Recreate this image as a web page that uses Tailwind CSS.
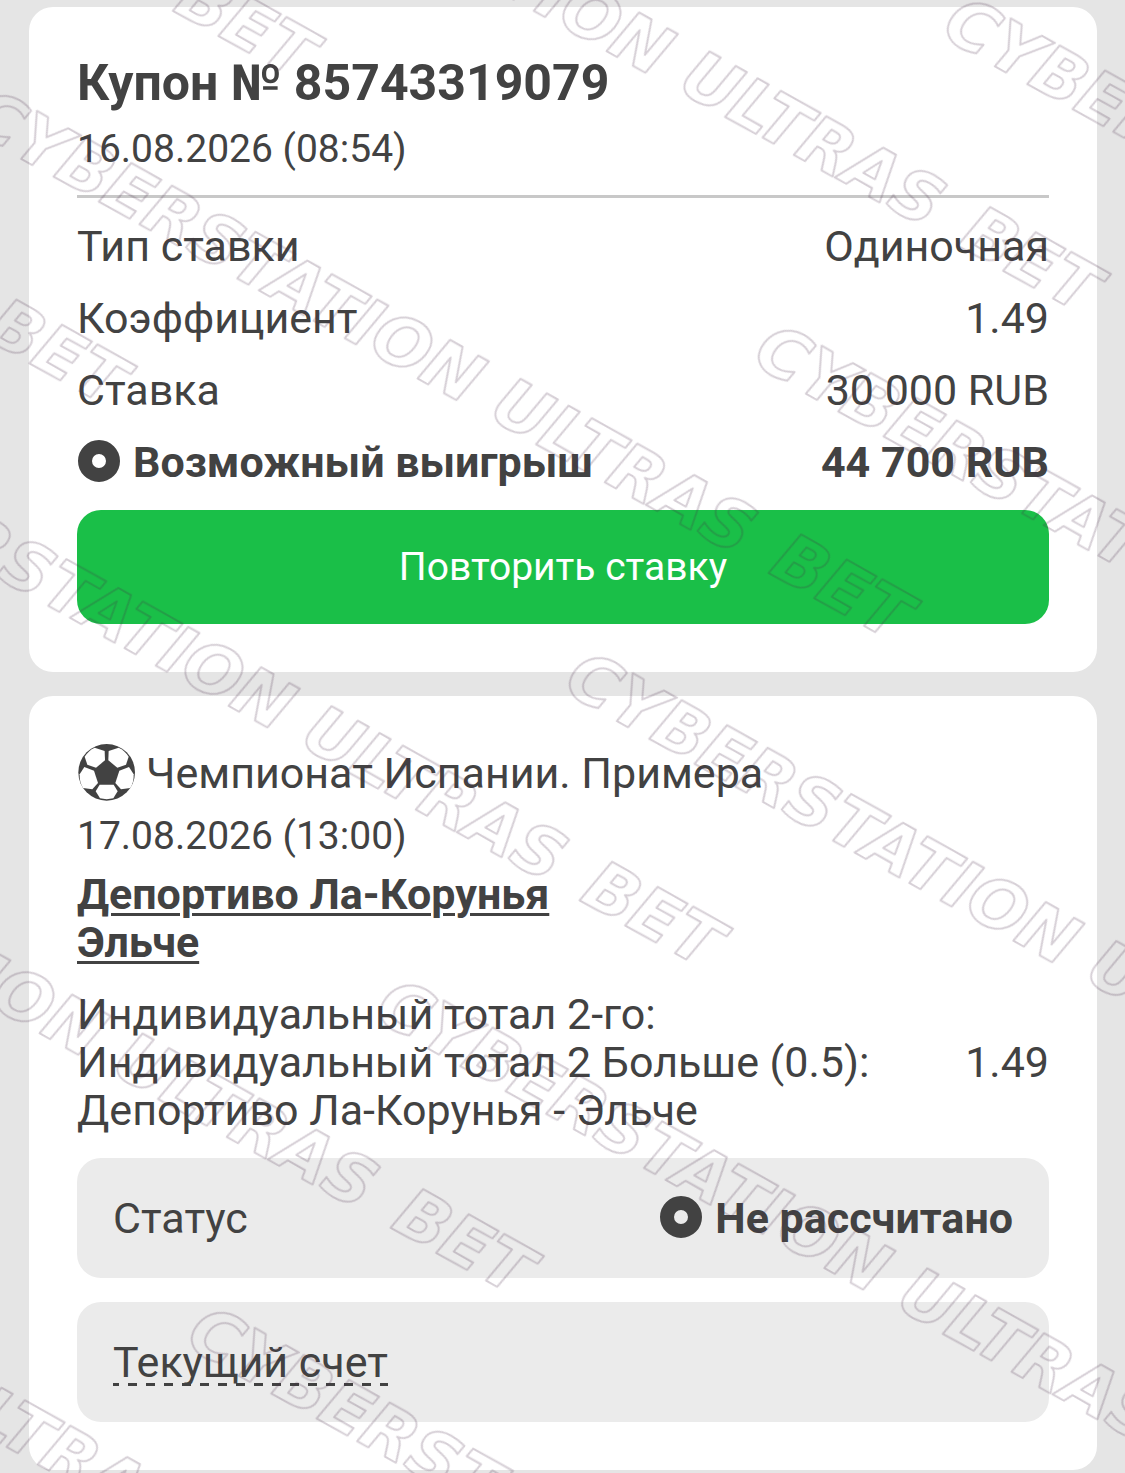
<!DOCTYPE html>
<html lang="ru">
  <head>
    <meta charset="UTF-8" />
    <meta name="viewport" content="width=device-width, initial-scale=1.0" />
    <script src="https://cdn.jsdelivr.net/npm/@tailwindcss/browser@4"></script>
    <title>Купон № 85743319079</title>
  </head>
  <body class="bg-[#e5e5e5] font-[Roboto,sans-serif] text-[#424242]">
    <div class="relative overflow-hidden">
      <main class="flex flex-col gap-6 pt-[7px] pb-[3px] pl-[29px] pr-7 text-[43px] leading-[48px]">
        <!-- coupon -->
        <section class="rounded-3xl bg-white p-12">
          <h1 class="text-[50px] leading-[56px] font-bold">Купон № 85743319079</h1>
          <p class="mt-[14px] text-[39px] leading-[48px]">16.08.2026 (08:54)</p>
          <hr class="mt-[22px] border-t-3 border-[#c8c8c8]" />
          <dl class="mt-6 flex flex-col gap-6">
            <div class="flex justify-between">
              <dt>Тип ставки</dt>
              <dd>Одиночная</dd>
            </div>
            <div class="flex justify-between">
              <dt>Коэффициент</dt>
              <dd>1.49</dd>
            </div>
            <div class="flex justify-between">
              <dt>Ставка</dt>
              <dd>30 000 RUB</dd>
            </div>
            <div class="flex justify-between font-bold">
              <dt class="flex items-center gap-3">
                <svg class="size-11" viewBox="0 0 44 44" aria-hidden="true">
                  <circle cx="22" cy="21" r="14" fill="none" stroke="#424242" stroke-width="14" />
                </svg>
                Возможный выигрыш
              </dt>
              <dd>44 700 RUB</dd>
            </div>
          </dl>
          <button
            type="button"
            class="mt-6 h-[114px] w-full rounded-3xl bg-[#1abf48] text-[39px] text-white"
          >
            Повторить ставку
          </button>
        </section>

        <!-- event -->
        <section class="rounded-3xl bg-white p-12">
          <h2 class="flex items-center gap-[11px]">
            <svg class="size-[58px]" viewBox="51 39 174 174" aria-hidden="true">
              <circle cx="140" cy="124" r="85" fill="#424242" />
              <g fill="#fff">
                <path d="M134 60L135 88L108 110L82 101L74 77Q86 58 104 50Z" />
                <path d="M146 60L145 88L172 110L198 101L206 77Q194 58 176 50Z" />
                <path d="M73 108L102 119L114 156L97 175L69 171Q58 153 59 130Z" />
                <path d="M207 108L178 119L166 156L183 175L211 171Q222 153 221 130Z" />
                <path d="M119 161L161 161L173 181L160 202Q140 207 120 202L107 181Z" />
              </g>
            </svg>
            Чемпионат Испании. Примера
          </h2>
          <p class="mt-[10px] text-[39px] leading-[48px]">17.08.2026 (13:00)</p>
          <a
            href="#"
            class="mt-[10px] block font-bold underline decoration-3 underline-offset-4"
          >
            Депортиво Ла-Корунья<br />Эльче
          </a>
          <div class="mt-6 flex items-center justify-between gap-6">
            <p>
              Индивидуальный тотал 2-го:<br />
              Индивидуальный тотал 2 Больше (0.5):<br />
              Депортиво Ла-Корунья - Эльче
            </p>
            <span>1.49</span>
          </div>
          <div class="mt-6 flex h-[120px] items-center justify-between rounded-3xl bg-[#ebebeb] px-9">
            <span>Статус</span>
            <span class="flex items-center gap-3 font-bold">
              <svg class="size-11" viewBox="0 0 44 44" aria-hidden="true">
                <circle cx="22" cy="21" r="14" fill="none" stroke="#424242" stroke-width="14" />
              </svg>
              Не рассчитано
            </span>
          </div>
          <div class="mt-6 flex h-[120px] items-center rounded-3xl bg-[#ebebeb] px-9">
            <button
              type="button"
              class="bg-[repeating-linear-gradient(90deg,#424242_0_6px,transparent_6px_15px,#424242_15px_18px)] bg-[length:100%_3px] bg-bottom bg-no-repeat"
            >
              Текущий счет
            </button>
          </div>
        </section>
      </main>

      <!-- watermark, staggered diagonal rows -->
      <svg class="pointer-events-none absolute inset-0 size-full" aria-hidden="true">
        <defs>
          <pattern
            id="mark"
            width="1594"
            height="378"
            patternUnits="userSpaceOnUse"
            patternTransform="rotate(30)"
          >
            <g
              class="font-['DejaVu_Sans',sans-serif] text-[68px] font-bold italic"
              fill="none"
              stroke="#462346"
              stroke-opacity="0.22"
              stroke-width="2"
              stroke-linejoin="round"
            >
              <text y="128" transform="rotate(-1 34 128)"><tspan x="34">CYBERSTATION</tspan><tspan x="630">ULTRAS</tspan><tspan x="951">BET</tspan></text>
              <text y="317" transform="rotate(-1 831 317)"><tspan x="831">CYBERSTATION</tspan><tspan x="1427">ULTRAS</tspan></text>
              <text y="317" transform="rotate(-1 -763 317)"><tspan x="-167">ULTRAS</tspan><tspan x="154">BET</tspan></text>
            </g>
          </pattern>
        </defs>
        <rect width="100%" height="100%" fill="url(#mark)" />
      </svg>
    </div>
  </body>
</html>
